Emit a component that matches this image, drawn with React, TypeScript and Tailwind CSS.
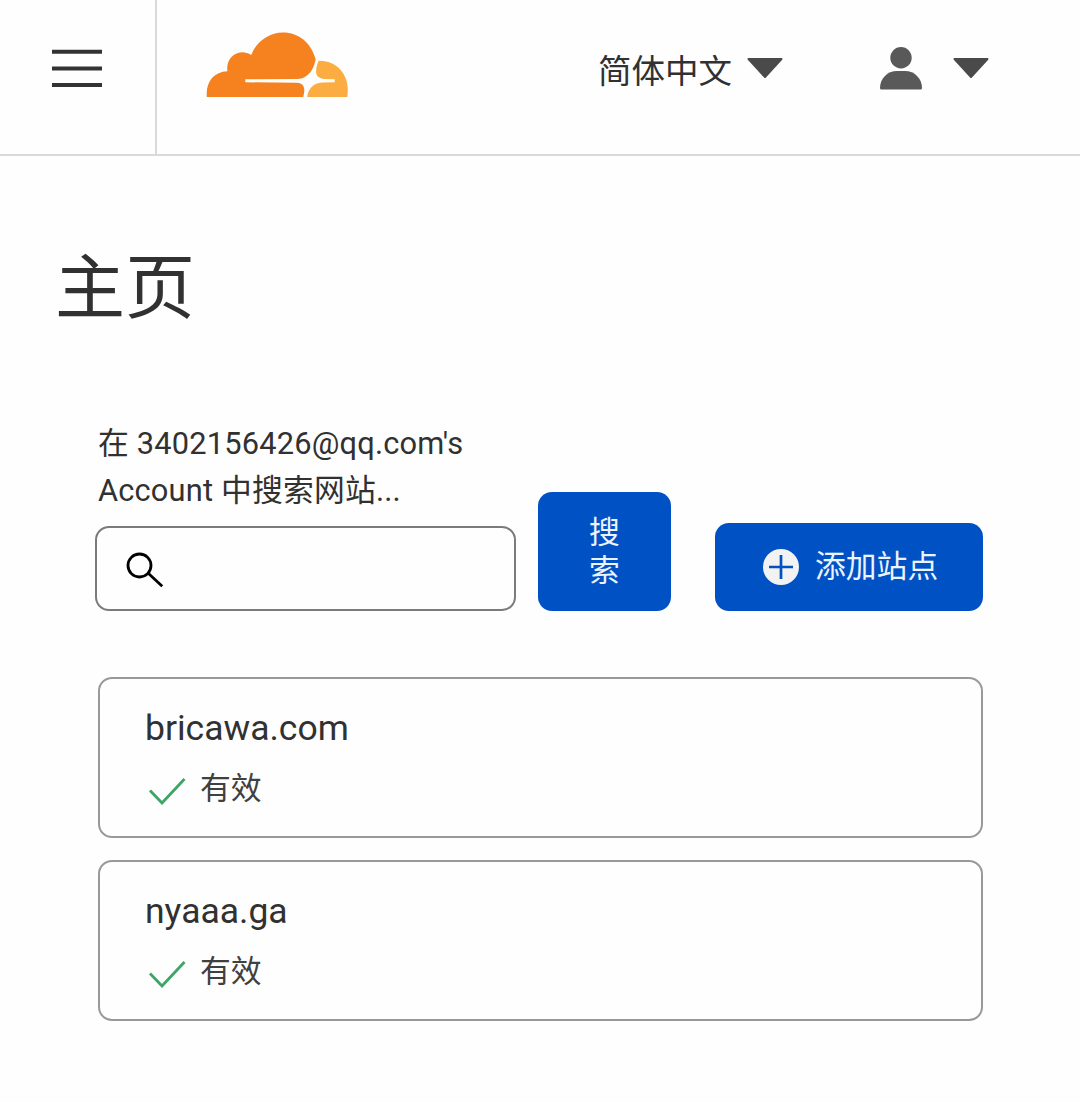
import React from "react";

function Logo() {
  return (
    <svg className="mt-[26px] ml-[43px] h-[78px] w-[156px]" viewBox="200 26 156 78" aria-label="Cloudflare">
      <path
        fill="#F6821F"
        d="M206.8 97C205.6 82 213.5 71.800 227.400 71.200C225.400 56.500 239.500 47.500 251.300 55C256 42 268.500 32.400 283 32.400C299 32.400 311.500 43 315.700 59.500C314 66.500 312 72 307 75.500C304 77.900 301 79 297 79.100L245.300 79.300V82.300L297 82.700C305 83.200 305.300 89.500 303.200 97Z"
      />
      <path
        fill="#FBAD41"
        d="M318.700 60.700C337.500 60.200 351 76 347.300 97H307.200C308.500 88.500 313.500 83 322 82.600L334.700 82.300V79.300L324 79C317 78.300 315.500 74 316.200 69.500C316.500 66.500 317.300 63.800 318.700 60.700Z"
      />
    </svg>
  );
}

function Caret() {
  return (
    <svg className="h-[21px] w-[36px]" viewBox="0 0 36 21">
      <path d="M1.500 1H34.500L18 19Z" fill="#4a4a4a" stroke="#4a4a4a" strokeWidth="2" strokeLinejoin="round" />
    </svg>
  );
}

function Header() {
  return (
    <header className="flex h-[156px] border-b-2 border-[#d9d9d9]">
      <button className="w-[157px] border-r-2 border-[#d9d9d9]" aria-label="菜单">
        <svg className="mb-[19px] ml-[52px] h-[40px] w-[50px]" viewBox="0 0 50 40" stroke="#333" strokeWidth="4">
          <path d="M0 3.700H50M0 20.400H50M0 36.900H50" />
        </svg>
      </button>
      <Logo />
      <button className="mt-[47px] ml-[242px] flex h-[48px] w-[185px] items-start justify-between">
        <span className="text-[33.500px] leading-[50px] whitespace-nowrap">简体中文</span>
        <span className="mt-[10.500px]"><Caret /></span>
      </button>
      <button className="mt-[46px] ml-[96px] flex h-[48px] w-[110px] items-start justify-between" aria-label="账户">
        <svg className="h-[45px] w-[44px]" viewBox="0 0 44 45">
          <circle cx="22" cy="11.700" r="10.700" fill="#595959" />
          <path d="M1 42C1 32.500 8.500 25 18 25H26C35.500 25 43 32.500 43 42Q43 43.500 41.500 43.500H2.500Q1 43.500 1 42Z" fill="#595959" />
        </svg>
        <span className="mt-[11.500px]"><Caret /></span>
      </button>
    </header>
  );
}

function SearchRow() {
  return (
    <section className="mt-[81px] flex items-end pl-[95px]">
      <div className="w-[421px]">
        <label htmlFor="site-search" className="block pl-[3px] text-[30.800px] leading-[47px] tracking-[0.180px]">
          在 3402156426@qq.com's
          <br />
          Account 中搜索网站...
        </label>
        <div className="mt-[12px] flex h-[85px] items-center rounded-[14px] border-2 border-[#7b7b7b] pl-[29px]">
          <svg className="mt-[3px] h-[36px] w-[38px]" viewBox="0 0 38 36" fill="none" stroke="#000" strokeWidth="2.800">
            <circle cx="13.500" cy="13.500" r="11.500" />
            <path d="M21.700 20.800L36.200 34.200" />
          </svg>
          <input id="site-search" className="h-full min-w-0 flex-1 outline-none" />
        </div>
      </div>
      <button className="ml-[22px] flex h-[119px] w-[133px] items-center justify-center rounded-[14px] bg-[#0051c3] text-[30.800px] leading-[38px] text-[#ebf3ff]">
        <span className="w-[31px] break-all">搜索</span>
      </button>
      <button className="ml-[44px] flex h-[88px] w-[268px] items-center rounded-[14px] bg-[#0051c3] pl-[48px] text-[30.800px] text-[#ebf3ff]">
        <svg className="h-[36px] w-[36px]" viewBox="0 0 36 36">
          <circle cx="18" cy="18" r="18" fill="#f2f2f2" />
          <path d="M6 18H30M18 6V30" stroke="#0051c3" strokeWidth="2.700" />
        </svg>
        <span className="ml-[16px] whitespace-nowrap">添加站点</span>
      </button>
    </section>
  );
}

function SiteCard({ domain }: { domain: string }) {
  return (
    <article className="h-[161px] rounded-[14px] border-2 border-[#999] pt-[25px] pl-[45px]">
      <h2 className="text-[35.500px] leading-[48px]">{domain}</h2>
      <div className="mt-[14px] flex h-[46px] items-center">
        <svg className="mt-[3px] ml-[2.500px] h-[28px] w-[40px]" viewBox="0 0 40 28" fill="none">
          <path d="M2 13.500L14 26L36.500 2" stroke="#3da565" strokeWidth="2.800" />
        </svg>
        <span className="ml-[12.500px] text-[30.800px] leading-[46px] text-[#404040]">有效</span>
      </div>
    </article>
  );
}

export default function App() {
  return (
    <div className="min-h-[1102px] w-[1080px] bg-[#fefefe] font-['Roboto','Noto_Sans_CJK_SC',sans-serif] text-[#313131]">
      <Header />
      <main>
        <h1 className="mt-[83px] ml-[55px] text-[70px] leading-[100px]">主页</h1>
        <SearchRow />
        <section className="mt-[66px] ml-[98px] flex w-[885px] flex-col gap-[22px]">
          <SiteCard domain="bricawa.com" />
          <SiteCard domain="nyaaa.ga" />
        </section>
      </main>
    </div>
  );
}
